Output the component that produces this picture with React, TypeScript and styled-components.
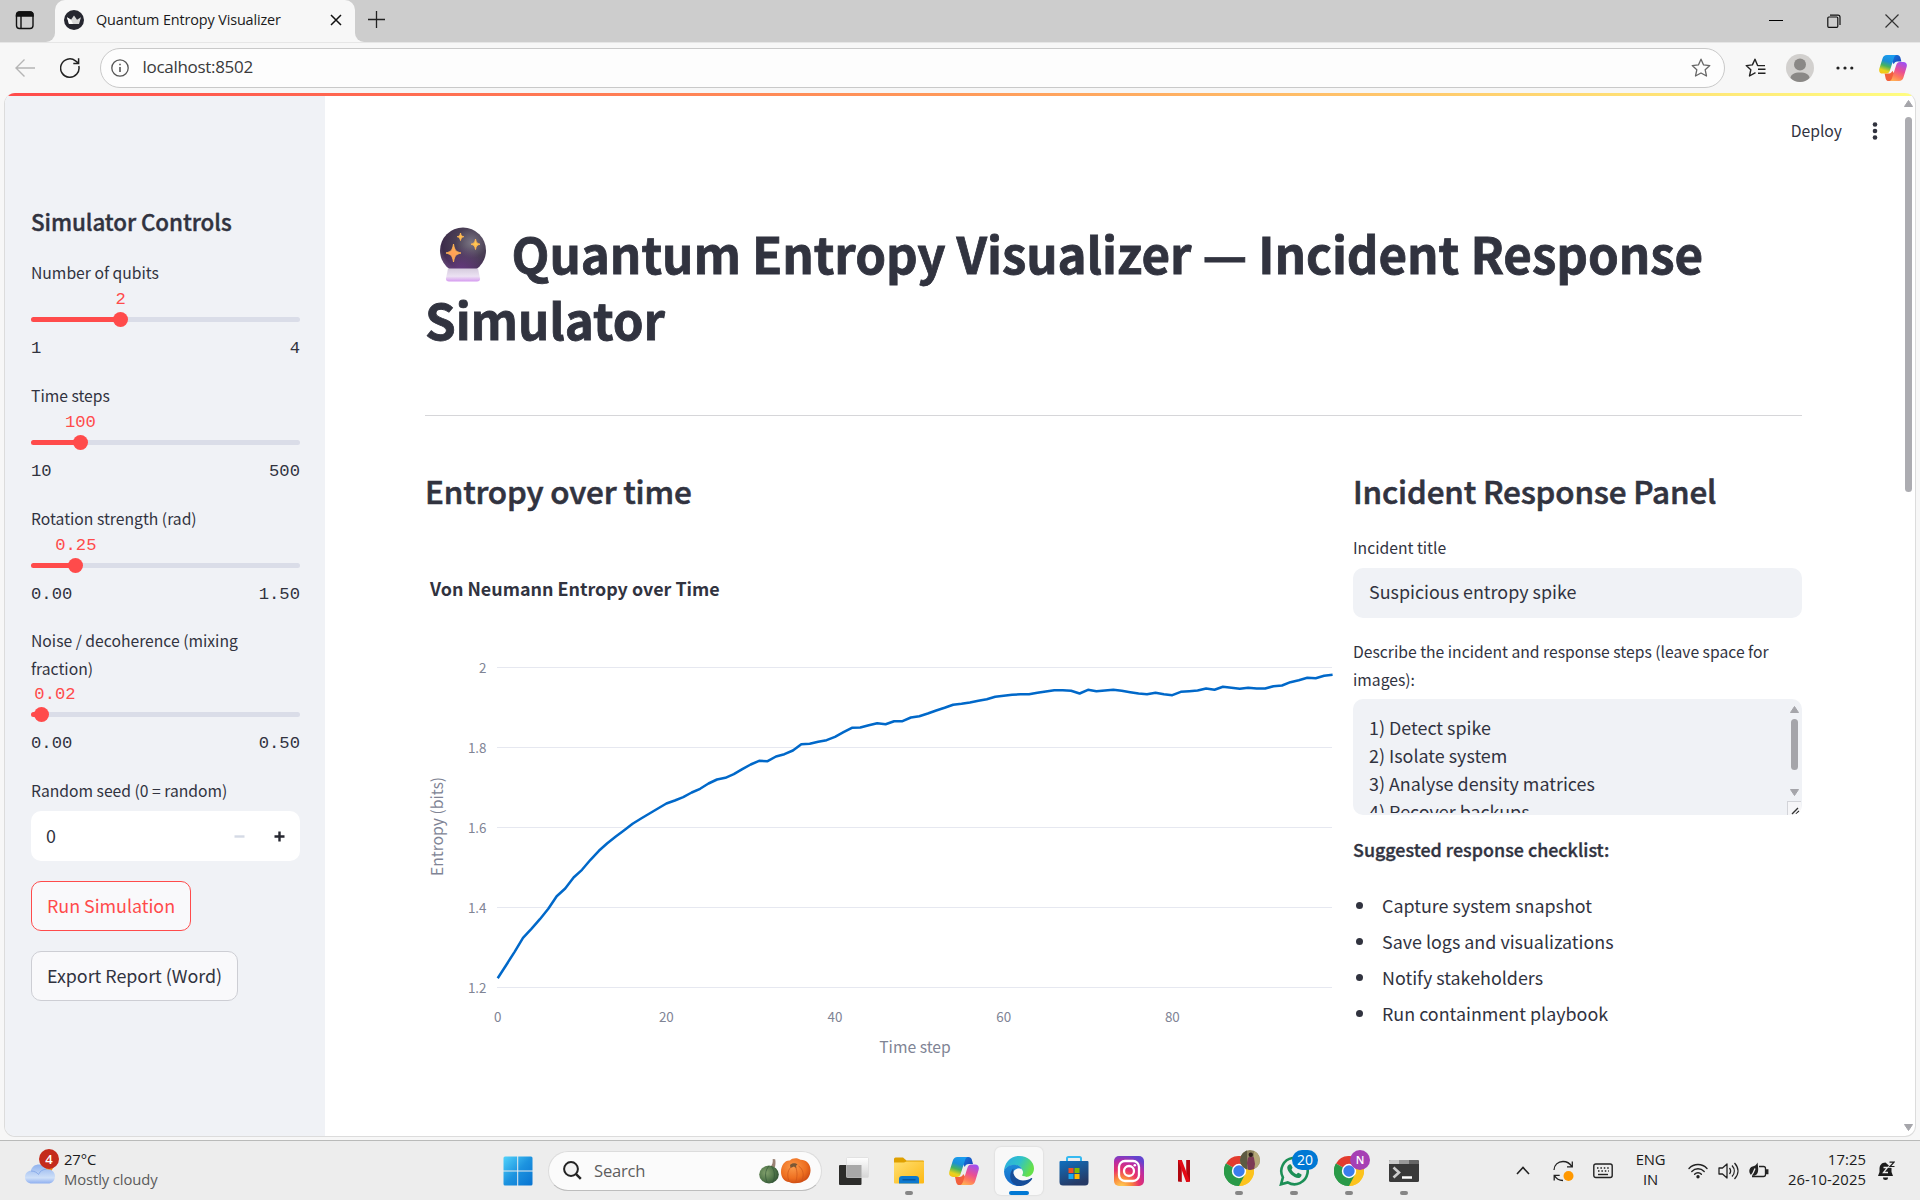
import React from 'react';
import styled, { createGlobalStyle } from 'styled-components';

const SANS = `"Noto Sans CJK JP", "Noto Sans CJK SC", "Open Sans", sans-serif`;
const UI = `"Open Sans", "Noto Sans", sans-serif`;
const MONO = `"Liberation Mono", monospace`;

const Global = createGlobalStyle`
  * { box-sizing: border-box; }
  body { margin: 0; background: #f7f7f7; overflow: hidden; }
  svg { display: block; flex: none; }
`;

const Screen = styled.div`
  width: 1920px;
  height: 1200px;
  display: flex;
  flex-direction: column;
  overflow: hidden;
  background: #f7f7f7;
  font-family: ${UI};
  color: #1b1b1b;
`;

/* ---------- browser frame ---------- */
const TitleBar = styled.header`
  height: 42px;
  display: flex;
  align-items: flex-start;
  background: #cdcdcd;
`;
const TabCorner = styled.div<{ $side: 'left' | 'right' }>`
  width: ${p => (p.$side === 'left' ? 55 : 48)}px;
  height: 42px;
  padding: ${p => (p.$side === 'left' ? '11px 0 0 15px' : '10px 0 0 12px')};
  background: #cdcdcd;
  border-bottom-right-radius: ${p => (p.$side === 'left' ? 9 : 0)}px;
  border-bottom-left-radius: ${p => (p.$side === 'right' ? 9 : 0)}px;
`;
const TabWrap = styled.div`
  display: flex;
  background: #f7f7f7;
  height: 42px;
`;
const TabShoulder = styled.div`
  background: #cdcdcd;
  height: 33px;
`;
const Tab = styled.div`
  width: 300px;
  height: 42px;
  display: flex;
  align-items: center;
  padding: 0 13px 2px 9px;
  background: #f7f7f7;
  border-radius: 10px 10px 0 0;
`;
const TabTitle = styled.span`
  flex: 1;
  margin-left: 12px;
  font-size: 14.4px;
  line-height: 20px;
  letter-spacing: -0.12px;
  color: #1a1a1a;
  white-space: nowrap;
`;
const WindowButtons = styled.div`
  margin-left: auto;
  display: flex;
  gap: 44px;
  padding: 14px 21.5px 0 0;
`;
const Toolbar = styled.div`
  height: 51px;
  display: flex;
  align-items: center;
  padding: 0 13px 1px 15px;
  border-top: 1px solid #e6e6e6;
`;
const AddressBar = styled.div`
  width: 1625px;
  height: 40px;
  margin-left: 20px;
  display: flex;
  align-items: center;
  padding: 0 13px 0 10px;
  border: 1px solid #c9c9c9;
  border-radius: 20px;
  background: #fdfdfd;
`;
const Address = styled.span`
  flex: 1;
  margin-left: 13.5px;
  padding-bottom: 1px;
  font-size: 17px;
  line-height: 24px;
  letter-spacing: -0.3px;
  color: #3a3a3a;
`;
const ToolIcon = styled.span<{ $left: number }>`
  margin-left: ${p => p.$left}px;
  display: flex;
`;

/* ---------- page ---------- */
const PageFrame = styled.div`
  height: 1044px;
  margin: 0 4px;
  display: flex;
  flex-direction: column;
  border: 1px solid #dcdcdc;
  border-top: 0;
  border-radius: 11px;
  background: #fff;
  overflow: hidden;
`;
const Rainbow = styled.div`
  height: 3px;
  flex: none;
  background: linear-gradient(90deg, #ff4b4b, #ff9a5a 50%, #fffd80);
`;
const PageBody = styled.div`
  flex: 1;
  display: flex;
  font-family: ${SANS};
  color: #31333f;
`;
const Sidebar = styled.aside`
  flex: none;
  width: 320px;
  padding: 109px 25px 0 26px;
  background: #f0f2f6;
`;
const SideTitle = styled.h2`
  margin: 0 0 21px;
  font-size: 22.4px;
  line-height: 32px;
  font-weight: 500;
  letter-spacing: -0.07px;
  -webkit-text-stroke: 0.4px #31333f;
`;
const Label = styled.div`
  min-height: 30px;
  display: flex;
  align-items: center;
  font-size: 15.7px;
  line-height: 28px;
`;
const SliderBox = styled.div`
  margin-bottom: 20px;
`;
const SliderBody = styled.div`
  height: 73px;
  font-family: ${MONO};
  font-size: 17.2px;
`;
const ValueRow = styled.div`
  height: 29px;
  line-height: 24px;
  color: #ff4b4b;
`;
const Value = styled.span`
  display: inline-block;
  transform: translateX(-50%);
`;
const Track = styled.div`
  position: relative;
  height: 5px;
  border-radius: 3px;
  background: #dadde8;
`;
const Fill = styled.div`
  height: 5px;
  border-radius: 3px;
  background: #ff4b4b;
`;
const Thumb = styled.i`
  position: absolute;
  top: -5px;
  width: 15px;
  height: 15px;
  margin-left: -7.5px;
  border-radius: 50%;
  background: #ff4b4b;
`;
const Range = styled.div`
  display: flex;
  justify-content: space-between;
  padding-top: 14px;
  line-height: 25px;
`;
const NumberField = styled.div`
  height: 50px;
  margin: 5px 0 20px;
  display: flex;
  align-items: center;
  justify-content: space-between;
  padding: 0 15px;
  border-radius: 10px;
  background: #fff;
  font-size: 17.9px;
  line-height: 24px;
`;
const NumberValue = styled.span`
  padding-bottom: 2px;
`;
const Steppers = styled.span`
  display: flex;
  gap: 29px;
`;
const Button = styled.button<{ $accent?: boolean }>`
  display: block;
  height: 50px;
  margin: 0 0 20px;
  padding: 0 15px 3px;
  border: 1px solid ${p => (p.$accent ? '#ff4b4b' : '#cdced4')};
  border-radius: 10px;
  background: #f9f9fb;
  color: ${p => (p.$accent ? '#ff4b4b' : '#31333f')};
  font: 17.9px/44px ${SANS};
  letter-spacing: -0.03px;
  white-space: nowrap;
`;
const Main = styled.main`
  flex: 1;
  min-width: 0;
  padding: 0 98px 0 100px;
`;
const PageHeader = styled.div`
  height: 124px;
  margin-right: -76px;
  padding-top: 21px;
  display: flex;
  justify-content: flex-end;
  gap: 30px;
  font-size: 15.7px;
  line-height: 28px;
`;
const Title = styled.h1`
  margin: 0;
  font-size: 49.3px;
  line-height: 66px;
  font-weight: 700;
  letter-spacing: -0.08px;
  -webkit-text-stroke: 0.8px #31333f;
`;
const Ball = styled.span`
  display: inline-block;
  width: 75.5px;
  height: 56px;
  padding-left: 13.5px;
  vertical-align: -9px;
`;
const Divider = styled.hr`
  margin: 63px 0 50px;
  border: 0;
  height: 1px;
  background: #d6d6d9;
`;
const Columns = styled.div`
  display: grid;
  grid-template-columns: 908px 449px;
  gap: 20px;
`;
const Heading = styled.h3`
  margin: 0;
  font-size: 31.4px;
  line-height: 50px;
  font-weight: 500;
  letter-spacing: -0.14px;
  -webkit-text-stroke: 0.6px #31333f;
`;
const TextField = styled.div`
  height: 50px;
  margin: 5px 0 20px;
  padding: 0 16px;
  border-radius: 10px;
  background: #f0f2f6;
  font-size: 17.9px;
  line-height: 47px;
`;
const TextArea = styled.div`
  height: 116px;
  margin-top: 5px;
  display: flex;
  justify-content: space-between;
  padding-left: 16px;
  border-radius: 10px;
  background: #f0f2f6;
  overflow: hidden;
`;
const AreaText = styled.div`
  height: 114px;
  padding-top: 14px;
  overflow: hidden;
  font-size: 17.9px;
  line-height: 28px;
`;
const Strong = styled.p`
  margin: 18px 0 22px;
  font-size: 17.9px;
  line-height: 32px;
  font-weight: 500;
  -webkit-text-stroke: 0.35px #31333f;
`;
const List = styled.ul`
  margin: 0;
  padding: 0;
  list-style: none;
`;
const Item = styled.li`
  display: flex;
  align-items: center;
  gap: 19px;
  padding-left: 3px;
  height: 36px;
  font-size: 17.9px;
  &::before {
    content: '';
    width: 7px;
    height: 7px;
    border-radius: 50%;
    background: #31333f;
  }
`;
const ScrollRail = styled.div`
  flex: none;
  width: 15px;
  padding: 4px 0 5px 4px;
  display: flex;
  flex-direction: column;
`;
const ScrollThumb = styled.div`
  width: 7px;
  height: 375px;
  margin: 10px 0 auto 0.5px;
  border-radius: 4px;
  background: #acacb1;
`;

/* ---------- taskbar ---------- */
const Taskbar = styled.footer`
  height: 60px;
  margin-top: 3px;
  display: flex;
  align-items: center;
  border-top: 1px solid #b9bab9;
  background: #ededed;
  font-size: 14.8px;
  line-height: 20px;
`;
const Weather = styled.div`
  width: 494px;
  display: flex;
  align-items: center;
  padding-left: 24px;
`;
const WeatherText = styled.div`
  margin: -4px 0 0 8px;
  letter-spacing: -0.1px;
  span { display: block; color: #5b5b5b; }
`;
const Slot = styled.div<{ $active?: boolean; $run?: boolean; $w?: number }>`
  position: relative;
  width: ${p => p.$w ?? 48}px;
  height: 48px;
  margin-right: 7px;
  display: flex;
  align-items: center;
  justify-content: center;
  border-radius: 6px;
  background: ${p => (p.$active ? '#f8f8f8' : 'none')};
  box-shadow: ${p => (p.$active ? '0 0 1px 1px #e2e2e2' : 'none')};
  &::after {
    content: '';
    position: absolute;
    bottom: 0;
    width: ${p => (p.$active ? 20 : p.$run ? 8 : 0)}px;
    height: 4px;
    border-radius: 2px;
    background: ${p => (p.$active ? '#0078d4' : '#868686')};
  }
`;
const Badge = styled.span<{ $bg: string; $w?: number }>`
  position: absolute;
  top: 3px;
  left: ${p => (p.$w ? 22 : 25)}px;
  width: ${p => p.$w ?? 20}px;
  height: 20px;
  border-radius: 10px;
  background: ${p => p.$bg};
  color: #fff;
  text-align: center;
  font-size: ${p => (p.$w ? 14 : 11)}px;
  font-weight: ${p => (p.$w ? 400 : 600)};
`;
const SearchBox = styled.div`
  width: 274px;
  height: 40px;
  margin: 0 8px 0 -1px;
  display: flex;
  align-items: center;
  padding: 0 10px 0 14px;
  border: 1px solid #dcdcdc;
  border-bottom-color: #bdbdbd;
  border-radius: 20px;
  background: #fbfbfb;
  font-size: 16.6px;
  color: #5e5e5e;
  span { flex: 1; margin-left: 12px; letter-spacing: -0.2px; }
`;
const Tray = styled.div`
  margin-left: auto;
  padding-right: 25px;
  display: flex;
  align-items: center;
`;
const TrayText = styled.div<{ $w: number; $align: string }>`
  width: ${p => p.$w}px;
  margin-top: -4px;
  text-align: ${p => p.$align};
  white-space: nowrap;
  letter-spacing: ${p => (p.$align === 'right' ? 0.08 : -0.25)}px;
`;

/* ---------- drawings ---------- */
const CopilotIcon = ({ size }: { size: number }) => (
  <svg width={size} height={size} viewBox="0 0 30 30">
    <defs>
      <linearGradient id="cpA" x1="0.6" y1="0" x2="0.3" y2="1">
        <stop offset="0" stopColor="#1a9df0" /><stop offset=".35" stopColor="#1b8fd8" /><stop offset=".6" stopColor="#47b35e" /><stop offset=".85" stopColor="#e8d21d" /><stop offset="1" stopColor="#f5c518" />
      </linearGradient>
      <linearGradient id="cpB" x1="0.7" y1="0" x2="0.3" y2="1">
        <stop offset="0" stopColor="#a050f0" /><stop offset=".45" stopColor="#ea4f93" /><stop offset=".75" stopColor="#ff7a5c" /><stop offset="1" stopColor="#ffae55" />
      </linearGradient>
      <linearGradient id="cpC" x1="0" y1="0" x2="1" y2="1">
        <stop offset="0" stopColor="#1479dd" /><stop offset="1" stopColor="#1b3fb6" />
      </linearGradient>
    </defs>
    <path d="M14 1h5.5c1.800 0 2.800 1 3.300 2.600L24 8h-4c-2.500 0-3.600 1.200-4.200 3L14 8z" fill="url(#cpC)" />
    <path d="M16 29h-5.500c-1.800 0-2.800-1-3.300-2.600L6 21h4c2.500 0 3.600-1 4.200-3L17 22z" fill="#f2603c" />
    <path d="M8.500 1h10.200c-1.500.4-2.200 1.600-2.700 3.200l-4.300 13.600C11 20 10 21 7.700 21H4c-3.200 0-4.500-2.400-3.600-5.400L3.700 5C4.500 2.300 6 1 8.500 1z" fill="url(#cpA)" />
    <path d="M21.500 29H11.300c1.500-.4 2.200-1.600 2.700-3.200l4.300-13.600C19 10 20 8.500 22.300 8.500H26c3.200 0 4.500 2.400 3.600 5.400L26.300 25c-.8 2.700-2.300 4-4.800 4z" fill="url(#cpB)" />
  </svg>
);

const ChromeIcon = () => (
  <svg width="30" height="30" viewBox="0 0 30 30">
    <path d="M15 15 2 7.500A15 15 0 0 1 28 7.500z" fill="#e33b2e" />
    <path d="M15 15 28 7.500A15 15 0 0 1 15 30z" fill="#fcc31e" />
    <path d="M15 15v15A15 15 0 0 1 2 7.500z" fill="#2a9a48" />
    <path d="M15 8h13.200A15 15 0 0 1 15 30l6-11.500z" fill="#fcc31e" />
    <path d="M8.900 18.500 2 7.500A15 15 0 0 0 15 30l6-11.500z" fill="#2a9a48" />
    <circle cx="15" cy="15" r="7.200" fill="#fff" />
    <circle cx="15" cy="15" r="5.700" fill="#3b7ded" />
  </svg>
);

const CrystalBall = () => (
  <svg width="48" height="56" viewBox="0 0 48 56">
    <defs>
      <radialGradient id="ball" cx=".68" cy=".33" r=".75">
        <stop offset="0" stopColor="#7a7583" /><stop offset=".45" stopColor="#4a3f55" /><stop offset=".85" stopColor="#3d2c4a" /><stop offset="1" stopColor="#5b4a68" />
      </radialGradient>
      <radialGradient id="glow" cx=".45" cy="1" r=".6">
        <stop offset="0" stopColor="#6b3b86" /><stop offset="1" stopColor="#6b3b86" stopOpacity="0" />
      </radialGradient>
      <linearGradient id="stand" x1="0" y1="0" x2="0" y2="1">
        <stop offset="0" stopColor="#d5cbdd" /><stop offset=".6" stopColor="#ece2f3" /><stop offset="1" stopColor="#d59af0" />
      </linearGradient>
      <linearGradient id="spark" x1="1" y1="0" x2="0" y2="1">
        <stop offset="0" stopColor="#ffd94d" /><stop offset="1" stopColor="#ff8f5a" />
      </linearGradient>
    </defs>
    <ellipse cx="24" cy="23.500" rx="23" ry="23" fill="url(#ball)" />
    <ellipse cx="24" cy="23.500" rx="23" ry="23" fill="url(#glow)" />
    <path d="M9 41.500h30l2 10c.3 2-1 3-3 3H10c-2 0-3.300-1-3-3z" fill="url(#stand)" />
    <path d="M14.500 17c1.200 6.500 2.200 7.500 7.500 9-5.300 1.500-6.300 2.500-7.500 9-1.200-6.500-2.200-7.500-7.500-9 5.300-1.500 6.300-2.500 7.500-9zM21.500 6c.6 2.600 1 3.200 3.300 3.700-2.300.6-2.700 1.200-3.300 3.800-.6-2.600-1-3.200-3.300-3.800 2.300-.5 2.700-1.100 3.300-3.700zM36.500 12c.8 3.600 1.300 4.400 4.500 5.200-3.200.8-3.700 1.600-4.500 5.300-.8-3.700-1.300-4.500-4.500-5.300 3.200-.8 3.700-1.600 4.500-5.200z" fill="url(#spark)" stroke="#ffb454" strokeWidth=".9" strokeLinejoin="round" />
  </svg>
);

const Star = () => <path d="M10 1.200l2.600 5.700 6.200.7-4.600 4.200 1.300 6.200L10 15l-5.500 3 1.300-6.200L1.200 7.600l6.200-.7z" />;

/* ---------- chart ---------- */
const GRID_TOP = 82;
const GRID_STEP = 240;
const samples = [
  1014, 975, 935, 893, 866, 837, 806, 768, 745, 712, 689, 659, 632, 609, 589, 570, 551, 535, 520, 505,
  490, 481, 471, 457, 446, 430, 418, 413, 402, 387, 373, 362, 363, 349, 342, 331, 312, 311, 305, 300,
  290, 276, 263, 262, 255, 249, 252, 243, 243, 232, 228, 220, 211, 203, 194, 191, 187, 182, 177, 170,
  167, 164, 162, 162, 158, 154, 150, 150, 152, 160, 149, 153, 151, 149, 152, 156, 160, 162, 158, 162,
  165, 155, 153, 151, 145, 149, 140, 143, 146, 143, 145, 145, 138, 136, 126, 120, 113, 114, 107, 104,
].map(v => 2 - ((v - GRID_TOP) / GRID_STEP) * 0.2);

const px = (step: number) => 72.7 + step * 8.433;
const py = (value: number) => 89.5 + (2 - value) * 400;

const ChartSvg = styled.svg`
  margin-top: 62px;
  overflow: visible;
  font-family: ${SANS};
  text { fill: #808495; font-size: 13.4px; }
  .axis { font-size: 15.7px; }
  .title { fill: #31333f; font-size: 17.9px; font-weight: 600; }
`;

const EntropyChart = () => (
  <ChartSvg width="908" height="490" viewBox="0 0 908 490">
    <text className="title" x="5" y="18">Von Neumann Entropy over Time</text>
    {[2, 1.8, 1.6, 1.4, 1.2].map(v => (
      <g key={v}>
        <line x1="72" x2="907" y1={py(v)} y2={py(v)} stroke="#e6e8f0" />
        <text x="61.500" y={py(v) + 5.500} textAnchor="end">{v}</text>
      </g>
    ))}
    {[0, 20, 40, 60, 80].map(s => (
      <text key={s} x={px(s)} y="444" textAnchor="middle">{s}</text>
    ))}
    <polyline
      points={samples.map((v, i) => `${px(i).toFixed(1)},${py(v).toFixed(1)}`).join(' ')}
      fill="none" stroke="#0068c9" strokeWidth="2.500" strokeLinejoin="round"
    />
    <text className="axis" x="490" y="475" textAnchor="middle">Time step</text>
    <text className="axis" transform="translate(17.800 248.500) rotate(-90)" textAnchor="middle">Entropy (bits)</text>
  </ChartSvg>
);

type SliderProps = { label: string; value: string; min: string; max: string; fraction: number };
const Slider = ({ label, value, min, max, fraction }: SliderProps) => (
  <SliderBox>
    <Label>{label}</Label>
    <SliderBody>
      <ValueRow>
        <Value style={{ marginLeft: Math.max(fraction * 269, 24) }}>{value}</Value>
      </ValueRow>
      <Track>
        <Fill style={{ width: `${fraction * 100}%` }} />
        <Thumb style={{ left: `${fraction * 100}%` }} />
      </Track>
      <Range><span>{min}</span><span>{max}</span></Range>
    </SliderBody>
  </SliderBox>
);

const BrowserChrome = () => (
  <>
    <TitleBar>
      <TabWrap>
        <TabCorner $side="left">
          <svg width="20" height="19" viewBox="0 0 20 19" fill="none" stroke="#111" strokeWidth="1.400">
            <rect x="1.500" y="1" width="16.500" height="16.500" rx="3" />
            <path d="M1.500 5V4a3 3 0 0 1 3-3H15a3 3 0 0 1 3 3v1z" fill="#111" />
            <path d="M6 5v12.500" />
          </svg>
        </TabCorner>
        <TabShoulder>
          <Tab>
            <svg width="20" height="20" viewBox="0 0 20 20">
              <circle cx="10" cy="10" r="10" fill="#262730" />
              <path d="M3 7.300l4 2.500L10 5.500l3 4.300 4-2.500-2 6.700H5z" fill="#d8d8d8" />
              <path d="M3 7.300l4 2.500 2 4.200H5z" fill="#fff" />
            </svg>
            <TabTitle>Quantum Entropy Visualizer</TabTitle>
            <svg width="12" height="12" viewBox="0 0 12 12" stroke="#111" strokeWidth="1.500"><path d="M1 1l10 10M11 1L1 11" /></svg>
          </Tab>
        </TabShoulder>
        <TabCorner $side="right">
          <svg width="19" height="19" viewBox="0 0 19 19" stroke="#222" strokeWidth="1.300"><path d="M9.500 1v17M1 9.500h17" /></svg>
        </TabCorner>
      </TabWrap>
      <WindowButtons>
        <svg width="14" height="14" viewBox="0 0 14 14" stroke="#000"><path d="M0 6.500h14" /></svg>
        <svg width="14" height="14" viewBox="0 0 14 14" fill="none" stroke="#111" strokeWidth="1.200"><rect x=".8" y="3" width="10" height="10.300" rx="1" /><path d="M3 1.200h8a2 2 0 0 1 2 2V11" /></svg>
        <svg width="14" height="14" viewBox="0 0 14 14" stroke="#333" strokeWidth="1.200"><path d="M.5.500l13 13M13.500.500l-13 13" /></svg>
      </WindowButtons>
    </TitleBar>
    <Toolbar>
      <svg width="20" height="20" viewBox="0 0 20 20" fill="none" stroke="#b5b5b5" strokeWidth="1.400"><path d="M20 10H1M9.500 1.500L1 10l8.500 8.500" /></svg>
      <ToolIcon $left={25}>
        <svg width="20" height="20" viewBox="0 0 20 20" fill="none" stroke="#222" strokeWidth="1.500"><path d="M18.800 8A9.200 9.200 0 1 1 15.500 2.800L18.300 5M18.600.200v5.300h-5.300" /></svg>
      </ToolIcon>
      <AddressBar>
        <svg width="18" height="18" viewBox="0 0 18 18" fill="none" stroke="#555" strokeWidth="1.300"><circle cx="9" cy="9" r="8.200" /><path d="M9 8v5M9 4.800v1.500" strokeWidth="1.600" /></svg>
        <Address>localhost:8502</Address>
        <svg width="20" height="20" viewBox="0 0 20 20" fill="none" stroke="#666" strokeWidth="1.300" strokeLinejoin="round"><Star /></svg>
      </AddressBar>
      <ToolIcon $left={20}>
        <svg width="21" height="20" viewBox="0 0 21 20" fill="none" stroke="#222" strokeWidth="1.400" strokeLinejoin="round">
          <path d="M20 7.600h-7.400L10 1.200 7.400 6.900l-6.200.7 4.600 4.200-1.300 6.200 6-3.300M13 11.300h7.500M13 15.200h7.500" />
        </svg>
      </ToolIcon>
      <ToolIcon $left={20}>
        <svg width="28" height="28" viewBox="0 0 28 28">
          <circle cx="14" cy="14" r="14" fill="#d2d0ce" /><circle cx="14" cy="10.500" r="6" fill="#8a8886" />
          <path d="M4.500 24c0-3.500 4-5.500 9.500-5.500s9.500 2 9.500 5.500A14 14 0 0 1 14 28a14 14 0 0 1-9.500-4z" fill="#8a8886" />
        </svg>
      </ToolIcon>
      <ToolIcon $left={22}>
        <svg width="18" height="4" viewBox="0 0 18 4" fill="#222"><circle cx="2" cy="2" r="1.600" /><circle cx="9" cy="2" r="1.600" /><circle cx="15.800" cy="2" r="1.600" /></svg>
      </ToolIcon>
      <ToolIcon $left={25}><CopilotIcon size={28} /></ToolIcon>
    </Toolbar>
  </>
);

const up = 'M4.500 0.500 L8.500 6.500 H0.500 Z';
const down = 'M4.500 6.500 L8.500 0.500 H0.500 Z';
const Arrow = ({ d }: { d: string }) => (
  <svg width="9" height="7" viewBox="0 0 9 7"><path d={d} fill="#a5a5aa" stroke="#a5a5aa" strokeLinejoin="round" /></svg>
);
const AreaRail = styled.div`
  width: 15px;
  display: flex;
  flex-direction: column;
  align-items: center;
  padding: 7px 1px 0 0;
`;
const AreaThumb = styled.div`
  width: 7px;
  height: 51px;
  margin: 6px 0 19px;
  border-radius: 4px;
  background: #a5a5aa;
`;
const Grip = styled.div`
  width: 14px;
  height: 14px;
  margin-top: 5px;
  border: solid #d3d4d9;
  border-width: 1px 0 0 1px;
  background: #f6f6f8;
`;

const WindowsTaskbar = () => (
  <Taskbar>
    <Weather>
      <Slot $w={32} style={{ marginRight: 0 }}>
        <svg width="32" height="32" viewBox="0 0 32 32">
          <defs><linearGradient id="cloud" x1="0" y1="0" x2="0" y2="1"><stop offset="0" stopColor="#8fb2ee" /><stop offset=".7" stopColor="#cfe0f8" /><stop offset="1" stopColor="#8eaff0" /></linearGradient></defs>
          <circle cx="23" cy="11" r="6.500" fill="#f58a1c" />
          <path d="M8 28.500c-4 0-7-2.500-7-6.500s3-6.300 5.800-6.300C8 11.500 11 9.500 15 9.500c3.700 0 6 2 7.300 4.700 5-.5 8.700 2.600 8.700 7 0 4.500-3 7.300-7 7.300z" fill="url(#cloud)" />
          <path d="M7 16c3 0 6 1.300 7.500 3.500C16 16 19 14.300 22.300 14.200" fill="none" stroke="#7fa3e6" strokeWidth=".8" />
        </svg>
        <Badge $bg="#c42b1c" style={{ left: 15, top: 2, fontSize: 13 }}>4</Badge>
      </Slot>
      <WeatherText>27°C<span>Mostly cloudy</span></WeatherText>
    </Weather>
    <Slot>
      <svg width="30" height="30" viewBox="0 0 30 30">
        <defs><linearGradient id="win" x1="0" y1="0" x2="1" y2="1"><stop offset="0" stopColor="#52d3fb" /><stop offset=".5" stopColor="#1d93df" /><stop offset="1" stopColor="#0873d1" /></linearGradient></defs>
        <path d="M.500 2A1.500 1.500 0 0 1 2 .500h12.200v14H.500zM15.200.500H28A1.500 1.500 0 0 1 29.500 2v12.500H15.200zM.500 15.500h13.700v14H2A1.500 1.500 0 0 1 .500 28zM15.200 15.500h14.300V28a1.500 1.500 0 0 1-1.500 1.500H15.200z" fill="url(#win)" />
      </svg>
    </Slot>
    <SearchBox>
      <svg width="19" height="19" viewBox="0 0 19 19" fill="#f2f2f2" stroke="#222" strokeWidth="2"><circle cx="8" cy="8" r="6.900" /><path d="M12.800 12.800l5 5" strokeWidth="2.500" /></svg>
      <span>Search</span>
      <svg width="52" height="26" viewBox="0 0 52 26">
        <defs>
          <radialGradient id="gourd" cx=".35" cy=".4" r=".75"><stop offset="0" stopColor="#84a26e" /><stop offset=".6" stopColor="#4e7347" /><stop offset="1" stopColor="#2c4a30" /></radialGradient>
          <radialGradient id="pumpkin" cx=".4" cy=".35" r=".75"><stop offset="0" stopColor="#fb9a4a" /><stop offset=".6" stopColor="#ee6f20" /><stop offset="1" stopColor="#c4400f" /></radialGradient>
        </defs>
        <path d="M11 9c2.500-2 3-4.500 2.700-8l2.500.300c.6 3 .3 6-.4 8.500z" fill="#9a8274" />
        <ellipse cx="10" cy="16.500" rx="9.800" ry="9" fill="url(#gourd)" />
        <path d="M10 8c-4 4-4.500 11-1.500 17M12 8c4 4 4.500 11 1.500 17" fill="none" stroke="#35583a" strokeWidth=".7" />
        <path d="M22 14c0-7 4-12 9-11.500 2-3 8-3 10.500-.8C47 1.500 52 6 51.500 13c-.3 5-3 9-6.500 10-3 2.500-12 3-15 1-5-.5-8-5-8-10z" fill="url(#pumpkin)" />
        <path d="M31 7c2-2.500 6-2 7.500-.5l-1.500 1.200.5 2.800-2.500-2L31.500 10z" fill="#7a5836" />
        <path d="M36.500 9c2 4 2 10 0 16M39.500 8c5 3 6 10 3 15M32 9c-4 4-4 10-1.500 15" fill="none" stroke="#cc541a" strokeWidth=".7" />
      </svg>
    </SearchBox>
    <Slot>
      <svg width="30" height="28" viewBox="0 0 30 28">
        <defs><linearGradient id="glass" x1="0" y1="0" x2="0" y2="1"><stop offset="0" stopColor="#fff" /><stop offset="1" stopColor="#d5d5d5" /></linearGradient></defs>
        <rect x="0" y="8" width="22.500" height="20" rx="1" fill="#2c2c2a" />
        <rect x="7.500" y=".5" width="22" height="20" rx="1" fill="url(#glass)" stroke="#dadada" strokeWidth=".7" />
        <path d="M7.500 8h15v12.500h-15z" fill="#a8a8a8" />
      </svg>
    </Slot>
    <Slot $run>
      <svg width="30" height="27" viewBox="0 0 30 27">
        <defs><linearGradient id="folder" x1="0" y1="0" x2="1" y2="1"><stop offset="0" stopColor="#ffdf70" /><stop offset="1" stopColor="#fdb813" /></linearGradient></defs>
        <path d="M0 8V2a1.500 1.500 0 0 1 1.500-1.500H9L12.500 3.500H29a1 1 0 0 1 1 1V8z" fill="#dfa000" />
        <path d="M0 5.500h10l2.500-1H30V25.500a1 1 0 0 1-1 1H1a1 1 0 0 1-1-1z" fill="url(#folder)" />
        <path d="M5 26.500V22a3 3 0 0 1 3-3h14a3 3 0 0 1 3 3v4.500z" fill="#0d79cf" /><path d="M8.500 22.800h13" stroke="#084f94" strokeWidth="1.200" />
      </svg>
    </Slot>
    <Slot><CopilotIcon size={30} /></Slot>
    <Slot $active>
      <svg width="30" height="30" viewBox="0 0 30 30">
        <defs>
          <linearGradient id="edA" x1="0" y1="0" x2="1" y2=".4"><stop offset="0" stopColor="#2aa9e4" /><stop offset=".55" stopColor="#30c2c9" /><stop offset="1" stopColor="#66e04a" /></linearGradient>
          <linearGradient id="edB" x1="0" y1="0" x2="0" y2="1"><stop offset="0" stopColor="#1d8bd8" /><stop offset="1" stopColor="#1467c9" /></linearGradient>
        </defs>
        <path d="M0 16C0 7 6.500 0 15.300 0 24 0 30 6 30 12.500c0 5-3.700 8.500-8.500 8.500-3 0-4.600-1-4.600-2 0-.8 1.400-1.300 1.400-3.700C18.300 11.500 15 9 10.500 9 5 9 1 12 0 16z" fill="url(#edA)" />
        <path d="M0 15.500C1 11.500 5 8.700 10 8.700c5 0 8.300 3 8.300 6.500-1-2.300-2.800-3-4.800-2.700-4 1-5.500 5-4.300 9 1.300 4.500 5 7.500 9.500 8.100A15 15 0 0 1 0 15.500z" fill="url(#edB)" />
        <path d="M9.500 12.500c-1.500 6 2.500 12 9.500 12 3.800 0 6.500-1.300 8.300-2.500.7-.4 1.200.3.800 1C25.500 27 21 30 16 30c-6 0-10-5-9.800-10 .1-3.500 1.500-6 3.300-7.500z" fill="#164d99" />
        <path d="M18 15.500c0 2.300-1.400 2.600-1.400 3.600s2 2.200 5 2.200" fill="none" stroke="#f8f8f8" strokeWidth="2" />
        <ellipse cx="15.500" cy="16.500" rx="3.300" ry="4" fill="#f8f8f8" />
      </svg>
    </Slot>
    <Slot>
      <svg width="30" height="30" viewBox="0 0 30 30">
        <defs><linearGradient id="store" x1="0" y1="0" x2=".4" y2="1"><stop offset="0" stopColor="#0f70bf" /><stop offset="1" stopColor="#263a66" /></linearGradient></defs>
        <path d="M8 6V2.500A1.500 1.500 0 0 1 9.500 1h11A1.500 1.500 0 0 1 22 2.500V6" fill="none" stroke="#35b9f1" strokeWidth="2" />
        <path d="M.500 6a1 1 0 0 1 1-1h27a1 1 0 0 1 1 1v20a3.500 3.500 0 0 1-3.500 3.500H4A3.500 3.500 0 0 1 .500 26z" fill="url(#store)" />
        <path d="M9.500 12h5v5h-5z" fill="#f25022" /><path d="M15.500 12h5v5h-5z" fill="#7fba00" /><path d="M9.500 18h5v5h-5z" fill="#18a9ef" /><path d="M15.500 18h5v5h-5z" fill="#ffb900" />
      </svg>
    </Slot>
    <Slot>
      <svg width="30" height="30" viewBox="0 0 30 30" fill="none" stroke="#fff" strokeWidth="2.300">
        <defs>
          <radialGradient id="ig" cx=".25" cy="1.050" r="1.100"><stop offset="0" stopColor="#ffd75a" /><stop offset=".3" stopColor="#fb8a3c" /><stop offset=".55" stopColor="#e8316b" /><stop offset=".8" stopColor="#b82ca5" /><stop offset="1" stopColor="#6444cf" /></radialGradient>
        </defs>
        <rect width="30" height="30" rx="5" fill="url(#ig)" stroke="none" />
        <rect x="5" y="5" width="20" height="20" rx="6" /><circle cx="15" cy="15" r="5" /><circle cx="20.800" cy="9.200" r="1.300" fill="#fff" stroke="none" />
      </svg>
    </Slot>
    <Slot>
      <svg width="12" height="22" viewBox="0 0 12 22"><path d="M0 0h3.800v22L0 21.500zM8.200 0H12v21.500l-3.800.5z" fill="#b1060f" /><path d="M0 0h3.800L12 21.500 8.200 22z" fill="#e50914" /></svg>
    </Slot>
    <Slot $run>
      <ChromeIcon />
      <Badge $bg="#8f8560" style={{ overflow: 'hidden' }}>
        <svg width="20" height="20" viewBox="0 0 20 20"><path d="M0 0h7v20H0z" fill="#5d5a41" /><path d="M14 0h6v20h-6z" fill="#b5a878" /><path d="M8 8c2-2 5-2 6 0l1 6-1 6H8l-1-7z" fill="#7c3a55" /><circle cx="10.800" cy="4.800" r="2.200" fill="#2b1d1a" /></svg>
      </Badge>
    </Slot>
    <Slot $run>
      <svg width="30" height="30" viewBox="0 0 30 30" fill="none">
        <path d="M2 28.300l1.900-6.900A13.200 13.200 0 1 1 8.700 26.400z" fill="#ededed" stroke="#1c8f56" strokeWidth="2.600" />
        <path d="M10.300 8.500c.8-.5 1.700-.3 2 .4l1.200 2.700c.2.500-.9 1.800-1 2 .9 2 2.600 3.700 4.800 4.600.4 0 1.500-1.600 2-1.400l2.900 1.400c1 .6-.3 3.300-2 3.700-4.500 1-12-5.500-12-10.300 0-1.200 1-2.500 2.100-3.100z" fill="#1c8f56" />
      </svg>
      <Badge $bg="#0078d4" $w={26}>20</Badge>
    </Slot>
    <Slot $run>
      <ChromeIcon />
      <Badge $bg="#a63fb4">N</Badge>
    </Slot>
    <Slot $run>
      <svg width="30" height="22" viewBox="0 0 30 22">
        <rect width="30" height="22" rx="1.500" fill="#3a3a3a" /><path d="M1.500 0H10v4H0V1.500A1.500 1.500 0 0 1 1.500 0z" fill="#ccc" /><path d="M10 0h10v4H10z" fill="#999" /><path d="M20 0h8.500A1.500 1.500 0 0 1 30 1.500V4H20z" fill="#666" />
        <path d="M4.500 7.500l5.500 5-5.500 5" fill="none" stroke="#ccc" strokeWidth="2.600" /><path d="M13 17.500h10" stroke="#fff" strokeWidth="2.500" />
      </svg>
    </Slot>
    <Tray>
      <svg width="14" height="9" viewBox="0 0 14 9" fill="none" stroke="#222" strokeWidth="1.600"><path d="M1 8l6-6.500L13 8" /></svg>
      <ToolIcon $left={23}>
        <svg width="21" height="22" viewBox="0 0 21 22" fill="none" stroke="#222" strokeWidth="1.300">
          <path d="M1 10C1 5 5 1.500 10 1.500c4 0 7 2 8.800 5M19.300 1.500v5.300H14M10 20.500c-4 0-7-2-8.500-5M1.200 20.500v-5.200h5.500" />
          <circle cx="15.500" cy="16" r="5" fill="#ff9800" stroke="none" />
        </svg>
      </ToolIcon>
      <ToolIcon $left={19}>
        <svg width="20" height="16" viewBox="0 0 20 16" fill="none" stroke="#222" strokeWidth="1.400">
          <rect x=".8" y="1" width="18.400" height="13.500" rx="2" /><path d="M4 5h12M5 8h11" strokeDasharray="1.500 1.900" strokeWidth="1.600" /><path d="M5 11.500h10" />
        </svg>
      </ToolIcon>
      <TrayText $w={75} $align="center">ENG<br />IN</TrayText>
      <svg width="20" height="16" viewBox="0 0 20 16" fill="none" stroke="#222" strokeWidth="1.400" strokeLinecap="round">
        <path d="M1 5.500C6 .2 14 .2 19 5.500M3.800 8.500c3.500-3.600 8.900-3.600 12.400 0M6.600 11.300c1.900-2 4.900-2 6.800 0" /><circle cx="10" cy="13.700" r="1" fill="#222" />
      </svg>
      <ToolIcon $left={10}>
        <svg width="21" height="18" viewBox="0 0 21 18" fill="none" stroke="#222" strokeWidth="1.300" strokeLinejoin="round">
          <path d="M1 6h3.500L9 2v14l-4.500-4H1zM11.500 6c1.500 2 1.500 4 0 6M14 3.500c3 3.300 3 7.700 0 11M16.500 1c4.600 5 4.600 11 0 16" />
        </svg>
      </ToolIcon>
      <ToolIcon $left={9}>
        <svg width="21" height="17" viewBox="0 0 21 17" fill="none" stroke="#222" strokeWidth="1.300">
          <path d="M11 4.500h4.500a2 2 0 0 1 2 2v6a2 2 0 0 1-2 2H4" /><path d="M18 8h1.800v3.500H18z" fill="#222" />
          <path d="M9.500.500C10 4 11 9 9 12c-2 2.500-5 2-6.500.500C-.2 9 2 5 4.500 4.500 7 4 8.500 3 9.500.500z" fill="#222" stroke="none" /><path d="M2 15c2-2 4-5 5-8.500" stroke="#ededed" />
        </svg>
      </ToolIcon>
      <TrayText $w={97} $align="right">17:25<br />26-10-2025</TrayText>
      <ToolIcon $left={11}>
        <svg width="18" height="20" viewBox="0 0 18 20">
          <path d="M8.500 1.500c-4 0-6 3-6 6V11L1 15h15l-1.500-4V7z" fill="#1c1c1c" /><path d="M6 16.500h5a2.500 2.500 0 0 1-5 0z" fill="#1c1c1c" />
          <path d="M12.500 1.200H17L13 5.500h4.500" fill="none" stroke="#ededed" strokeWidth="2.600" />
          <path d="M12.500 1.200H17L13 5.500h4.500" fill="none" stroke="#1c1c1c" strokeWidth="1.200" /><path d="M6.500 6.500h4l-4 5h4.500" fill="none" stroke="#ededed" strokeWidth="1.300" />
        </svg>
      </ToolIcon>
    </Tray>
  </Taskbar>
);

export default function App() {
  return (
    <Screen>
      <Global />
      <BrowserChrome />
      <PageFrame>
        <Rainbow />
        <PageBody>
          <Sidebar>
            <SideTitle>Simulator Controls</SideTitle>
            <Slider label="Number of qubits" value="2" min="1" max="4" fraction={1 / 3} />
            <Slider label="Time steps" value="100" min="10" max="500" fraction={90 / 490} />
            <Slider label="Rotation strength (rad)" value="0.25" min="0.00" max="1.50" fraction={1 / 6} />
            <Slider label="Noise / decoherence (mixing fraction)" value="0.02" min="0.00" max="0.50" fraction={0.04} />
            <Label>Random seed (0 = random)</Label>
            <NumberField>
              <NumberValue>0</NumberValue>
              <Steppers>
                <svg width="11" height="11" viewBox="0 0 11 11" stroke="#d5dae5" strokeWidth="2.400"><path d="M.5 5.500h10" /></svg>
                <svg width="11" height="11" viewBox="0 0 11 11" stroke="#262730" strokeWidth="2.400"><path d="M.5 5.500h10M5.500.500v10" /></svg>
              </Steppers>
            </NumberField>
            <Button $accent>Run Simulation</Button>
            <Button>Export Report (Word)</Button>
          </Sidebar>
          <Main>
            <PageHeader>
              Deploy
              <svg width="6" height="28" viewBox="0 0 6 28" fill="#31333f"><circle cx="3" cy="7.500" r="2.300" /><circle cx="3" cy="14" r="2.300" /><circle cx="3" cy="20.500" r="2.300" /></svg>
            </PageHeader>
            <Title><Ball><CrystalBall /></Ball> Quantum Entropy Visualizer — Incident Response Simulator</Title>
            <Divider />
            <Columns>
              <section>
                <Heading>Entropy over time</Heading>
                <EntropyChart />
              </section>
              <section>
                <Heading style={{ marginBottom: 17 }}>Incident Response Panel</Heading>
                <Label>Incident title</Label>
                <TextField>Suspicious entropy spike</TextField>
                <Label>Describe the incident and response steps (leave space for images):</Label>
                <TextArea>
                  <AreaText>1) Detect spike<br />2) Isolate system<br />3) Analyse density matrices<br />4) Recover backups</AreaText>
                  <AreaRail>
                    <Arrow d={up} /><AreaThumb /><Arrow d={down} />
                    <Grip><svg width="13" height="13" viewBox="0 0 13 13" stroke="#333" strokeWidth="1.400"><path d="M4 12l6-6M8 12l3-3" /></svg></Grip>
                  </AreaRail>
                </TextArea>
                <Strong>Suggested response checklist:</Strong>
                <List>
                  <Item>Capture system snapshot</Item>
                  <Item>Save logs and visualizations</Item>
                  <Item>Notify stakeholders</Item>
                  <Item>Run containment playbook</Item>
                </List>
              </section>
            </Columns>
          </Main>
          <ScrollRail><Arrow d={up} /><ScrollThumb /><Arrow d={down} /></ScrollRail>
        </PageBody>
      </PageFrame>
      <WindowsTaskbar />
    </Screen>
  );
}
